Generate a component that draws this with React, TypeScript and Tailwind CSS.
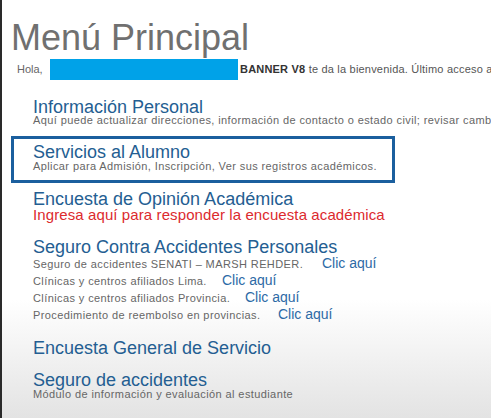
import React from "react";

const font = { fontFamily: '"Liberation Sans", Arial, sans-serif' };

function Heading({ children }: { children: React.ReactNode }) {
  return <div className="text-[18px] leading-[16px] text-[#245e92] whitespace-nowrap">{children}</div>;
}

function Desc({ children, className = "" }: { children: React.ReactNode; className?: string }) {
  return (
    <div className={"text-[11px] leading-[11px] tracking-[0.4px] text-[#666666] whitespace-nowrap " + className}>
      {children}
    </div>
  );
}

function LinkRow({ text, w }: { text: string; w: string }) {
  return (
    <div className="flex items-baseline h-[17px] whitespace-nowrap">
      <div className={"shrink-0 text-[11px] leading-[11px] tracking-[0.4px] text-[#666666] " + w}>{text}</div>
      <div className="text-[14px] leading-[17px] text-[#2d6aa6]">Clic aquí</div>
    </div>
  );
}

export default function App() {
  return (
    <div
      style={font}
      className="w-[491px] h-[418px] overflow-hidden border-l-2 border-[#2a2a2a] pl-[9px] pt-[20px] bg-[linear-gradient(180deg,#ffffff_300px,#e3e3e3_418px)]"
    >
      <div className="text-[36px] leading-[36px] text-[#707070] whitespace-nowrap">Menú Principal</div>

      <div className="mt-[3px] flex items-center h-[21px] whitespace-nowrap">
        <span className="ml-[6px] w-[33px] shrink-0 text-[11px] leading-[21px] text-[#666666]">Hola,</span>
        <span className="w-[188px] h-[21px] shrink-0 bg-[#00a2e8]"></span>
        <span className="ml-[2px] text-[11px] leading-[21px] tracking-[0.2px] text-[#555555]">
          <b className="text-[#333333]">BANNER V8</b> te da la bienvenida. Último acceso a la plataforma
        </span>
      </div>

      <div className="mt-[19px] pl-[22px]">
        <Heading>Información Personal</Heading>
        <Desc>
          Aquí puede actualizar direcciones, información de contacto o estado civil; revisar cambios
        </Desc>
      </div>

      <div className="mt-[10px] w-[384px] border-[3px] border-[#1b5f9e] pl-[19px] pt-[5px] pb-[8px]">
        <Heading>Servicios al Alumno</Heading>
        <Desc className="mt-[1px]">Aplicar para Admisión, Inscripción, Ver sus registros académicos.</Desc>
      </div>

      <div className="mt-[8px] pl-[22px]">
        <Heading>Encuesta de Opinión Académica</Heading>
        <div className="text-[15px] leading-[15px] tracking-[0.1px] text-[#dc2a2e] whitespace-nowrap">
          Ingresa aquí para responder la encuesta académica
        </div>
      </div>

      <div className="mt-[17px] pl-[22px]">
        <Heading>Seguro Contra Accidentes Personales</Heading>
        <LinkRow text="Seguro de accidentes SENATI – MARSH REHDER." w="w-[289px]" />
        <LinkRow text="Clínicas y centros afiliados Lima." w="w-[189px]" />
        <LinkRow text="Clínicas y centros afiliados Provincia." w="w-[212px]" />
        <LinkRow text="Procedimiento de reembolso en provincias." w="w-[245px]" />
      </div>

      <div className="mt-[17px] pl-[22px]">
        <Heading>Encuesta General de Servicio</Heading>
      </div>

      <div className="mt-[16px] pl-[22px]">
        <Heading>Seguro de accidentes</Heading>
        <Desc className="mt-[1px]">Módulo de información y evaluación al estudiante</Desc>
      </div>
    </div>
  );
}
